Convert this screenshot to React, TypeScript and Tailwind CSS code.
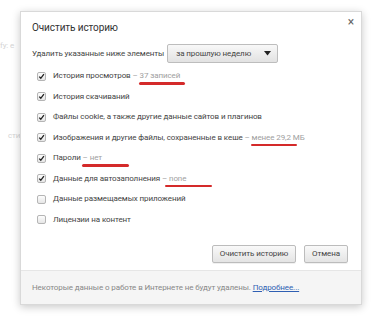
import React from 'react'

type Row = {
  label: string
  checked: boolean
  extra?: string
  mark?: { left: number; width: number }
}

const ROWS: Row[] = [
  { label: 'История просмотров', checked: true, extra: '37 записей', mark: { left: -1, width: 46 } },
  { label: 'История скачиваний', checked: true },
  { label: 'Файлы cookie, а также другие данные сайтов и плагинов', checked: true },
  { label: 'Изображения и другие файлы, сохраненные в кеше', checked: true, extra: 'менее 29,2 МБ', mark: { left: -1, width: 46 } },
  { label: 'Пароли', checked: true, extra: 'нет', mark: { left: -8, width: 47 } },
  { label: 'Данные для автозаполнения', checked: true, extra: 'none', mark: { left: -4, width: 47 } },
  { label: 'Данные размещаемых приложений', checked: false },
  { label: 'Лицензии на контент', checked: false },
]

function Box({ checked }: { checked: boolean }) {
  return (
    <span className="w-[9px] h-[9px] rounded-[2px] border border-[#b5b5b5] bg-gradient-to-b from-[#fdfdfd] to-[#e6e6e6] flex items-center justify-center shrink-0">
      {checked ? (
        <svg width="9" height="9" viewBox="0 0 9 9">
          <path d="M1.6 4.6 L3.6 6.8 L7.6 1.4" fill="none" stroke="#222" strokeWidth="1.7" />
        </svg>
      ) : null}
    </span>
  )
}

export default function App() {
  return (
    <div className="relative w-[382px] h-[320px] bg-white overflow-hidden text-[#444] tracking-[-0.1px]" style={{ fontFamily: 'Roboto, "Noto Sans", sans-serif' }}>
      <span className="absolute left-[0px] top-[40px] text-[8px] text-[#d4d4d4]">fy: e</span>
      <span className="absolute left-[8px] top-[130px] text-[8px] text-[#d4d4d4]">сти</span>

      <div className="absolute left-[20px] top-[11px] w-[342px] h-[294px] bg-white border border-[#d9d9d9] shadow-[0_2px_8px_rgba(0,0,0,0.22)] flex flex-col">
        <span className="absolute right-[7px] top-[3px] text-[12px] leading-[14px] text-[#666]">×</span>

        <div className="flex flex-col pl-[11px] pr-[13px] pt-[8px] flex-1">
          <div className="text-[10px] leading-[16px] text-[#333]">Очистить историю</div>

          <div className="flex items-center gap-[3px] mt-[8px] h-[19px] text-[8px]">
            <span className="whitespace-nowrap">Удалить указанные ниже элементы</span>
            <div className="w-[111px] h-[19px] border border-[#bdbdbd] rounded-[2px] bg-gradient-to-b from-[#f8f8f8] to-[#e2e2e2] flex items-center justify-between pl-[8px] pr-[6px]">
              <span className="whitespace-nowrap">за прошлую неделю</span>
              <svg width="7" height="5" viewBox="0 0 7 5">
                <path d="M0 0 H7 L3.5 4.5 Z" fill="#222" />
              </svg>
            </div>
          </div>

          <div className="flex flex-col mt-[3px] pl-[5px]">
            {ROWS.map(r => (
              <div key={r.label} className="flex items-center gap-[7px] h-[20.5px] text-[8px]">
                <Box checked={r.checked} />
                <span className="whitespace-nowrap">
                  {r.label}
                  {r.extra ? (
                    <span className="text-[#a0a0a0]">
                      {' '}–{' '}
                      <span className="relative">
                        {r.extra}
                        {r.mark ? (
                          <span
                            className="absolute top-[11px] h-[2.5px] rounded-full bg-[#d42a2a]"
                            style={{ left: r.mark.left, width: r.mark.width }}
                          />
                        ) : null}
                      </span>
                    </span>
                  ) : null}
                </span>
              </div>
            ))}
          </div>

          <div className="flex justify-end gap-[8px] mt-[15px]">
            <button className="w-[84px] h-[18px] border border-[#bcbcbc] rounded-[2px] bg-gradient-to-b from-[#f9f9f9] to-[#e4e4e4] text-[8px] text-[#444] whitespace-nowrap shadow-[0_1px_0_rgba(0,0,0,0.06)]">
              Очистить историю
            </button>
            <button className="w-[44px] h-[18px] border border-[#bcbcbc] rounded-[2px] bg-gradient-to-b from-[#f9f9f9] to-[#e4e4e4] text-[8px] text-[#444] whitespace-nowrap shadow-[0_1px_0_rgba(0,0,0,0.06)]">
              Отмена
            </button>
          </div>
        </div>

        <div className="h-[34px] border-t border-[#e6e6e6] bg-[#f5f5f5] flex items-center pl-[11px] text-[8px] text-[#888]">
          <span className="whitespace-nowrap">
            Некоторые данные о работе в Интернете не будут удалены.{' '}
            <span className="text-[#2f5fb3] underline">Подробнее...</span>
          </span>
        </div>
      </div>
    </div>
  )
}
